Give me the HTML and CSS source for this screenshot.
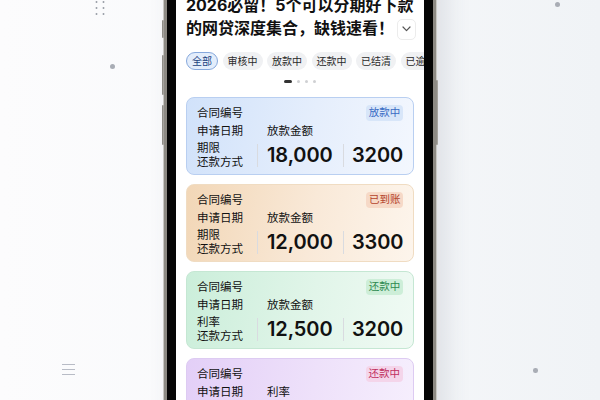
FILE: index.html
```html
<!DOCTYPE html>
<html lang="zh-CN">
<head>
<meta charset="utf-8">
<title>借款列表</title>
<link rel="stylesheet" href="styles.css">
</head>
<body>
<div class="stage">
  <span class="deco dotgrid"></span>
  <span class="deco dot dot-a"></span>
  <span class="deco dot dot-b"></span>
  <span class="deco dot dot-c"></span>
  <span class="deco burger"><i></i><i></i><i></i></span>

  <div class="phone">
    <span class="key key-l1"></span>
    <span class="key key-l2"></span>
    <span class="key key-l3"></span>
    <span class="key key-r1"></span>
    <div class="screen">
      <header class="head">
        <h1 class="title">2026必留！5个可以分期好下款的网贷深度集合，缺钱速看！</h1>
        <button class="more" type="button" aria-label="展开">
          <svg width="9" height="6" viewBox="0 0 9 6"><polyline points="1,1 4.5,4.6 8,1" fill="none" stroke="#555" stroke-width="1.2" stroke-linecap="round" stroke-linejoin="round"/></svg>
        </button>
      </header>

      <nav class="tabs">
        <span class="tab active">全部</span>
        <span class="tab">审核中</span>
        <span class="tab">放款中</span>
        <span class="tab">还款中</span>
        <span class="tab">已结清</span>
        <span class="tab">已逾期</span>
      </nav>

      <div class="pager"><i class="on"></i><i></i><i></i><i></i></div>

      <div class="cards">
        <div class="card blue">
          <span class="lbl">合同编号</span>
          <span class="badge">放款中</span>
          <span class="lbl">申请日期</span>
          <span class="sub">放款金额</span>
          <span class="lbl two">期限<br>还款方式</span>
          <span class="num">18,000</span>
          <span class="num last">3200</span>
        </div>
        <div class="card peach">
          <span class="lbl">合同编号</span>
          <span class="badge">已到账</span>
          <span class="lbl">申请日期</span>
          <span class="sub">放款金额</span>
          <span class="lbl two">期限<br>还款方式</span>
          <span class="num">12,000</span>
          <span class="num last">3300</span>
        </div>
        <div class="card green">
          <span class="lbl">合同编号</span>
          <span class="badge">还款中</span>
          <span class="lbl">申请日期</span>
          <span class="sub">放款金额</span>
          <span class="lbl two">利率<br>还款方式</span>
          <span class="num">12,500</span>
          <span class="num last">3200</span>
        </div>
        <div class="card purple">
          <span class="lbl">合同编号</span>
          <span class="badge">还款中</span>
          <span class="lbl">申请日期</span>
          <span class="sub">利率</span>
        </div>
      </div>
    </div>
  </div>
</div>
</body>
</html>
```

FILE: styles.css
```css
* { box-sizing: border-box; }

html, body {
  margin: 0;
  padding: 0;
}

body {
  width: 600px;
  height: 400px;
  overflow: hidden;
  font-family: "Inter", "Noto Sans CJK SC", sans-serif;
  color: #1d1d1f;
}

.stage {
  position: relative;
  width: 600px;
  height: 400px;
  overflow: hidden;
  display: flex;
  justify-content: center;
  background: linear-gradient(90deg, #fcfcfd 0%, #f8f9fb 45%, #f0f3f6 100%);
}

/* background decorations */
.deco { position: absolute; display: block; }

.dotgrid {
  left: 92.5px;
  top: -1px;
  width: 14px;
  height: 18px;
  background-image: radial-gradient(circle, #9ea3ab 0.9px, transparent 1.2px);
  background-size: 7px 6px;
}

.dot {
  width: 5px;
  height: 5px;
  border-radius: 50%;
  background: #a9adb5;
}
.dot-a { left: 110px; top: 64px; }
.dot-b { left: 555px; top: 2px; }
.dot-c { left: 533px; top: 368px; width: 4.5px; height: 4.5px; }

.burger {
  left: 62px;
  top: 364px;
  width: 13px;
  display: flex;
  flex-direction: column;
  gap: 4px;
}
.burger i {
  display: block;
  height: 1px;
  background: #b8bcc6;
}

/* phone */
.phone {
  position: relative;
  flex: none;
  width: 272px;
  height: 540px;
  margin-top: -70px;
  border: 3px solid #8d8a84;
  border-radius: 44px;
  background: #050505;
  padding: 9px;
  box-shadow: 0 0 0 1px #c9c8c4, 10px 0 26px rgba(70, 80, 100, 0.13);
}

.key {
  position: absolute;
  width: 2px;
  border-radius: 1px;
  background: linear-gradient(90deg, #85827c, #b0aea9);
}
.key-l1 { left: -5px; top: 87px; height: 18px; }
.key-l2 { left: -5px; top: 122px; height: 40px; }
.key-l3 { left: -5px; top: 172px; height: 40px; }
.key-r1 { right: -5px; top: 147px; height: 65px; }

.screen {
  height: 100%;
  background: #fff;
  border-radius: 34px;
  overflow: hidden;
  padding: 51.5px 10px 0;
}

/* header */
.head {
  display: grid;
}
.title, .more { grid-area: 1 / 1; }

.title {
  margin: 0;
  font-size: 16px;
  line-height: 23px;
  font-weight: 700;
  color: #111;
}

.more {
  justify-self: end;
  align-self: end;
  margin: 0 -2px 0 0;
  width: 19px;
  height: 21px;
  padding: 0;
  border: 1px solid #ececec;
  border-radius: 5px;
  background: #fff;
  display: flex;
  align-items: center;
  justify-content: center;
}

/* tabs */
.tabs {
  display: flex;
  gap: 4.5px;
  margin: 12.5px -10px 0 0;
  overflow: hidden;
  white-space: nowrap;
}
.tab {
  flex: none;
  height: 18px;
  padding: 0 4px;
  border: 1px solid transparent;
  border-radius: 9px;
  background: #f0f1f3;
  font-size: 10px;
  line-height: 16px;
  color: #2a2a2a;
}
.tab.active {
  padding: 0 5px;
  background: #e3edfb;
  border-color: #86a8dc;
  color: #22427f;
}

/* pager */
.pager {
  display: flex;
  justify-content: center;
  align-items: center;
  gap: 5px;
  margin-top: 10px;
  height: 3px;
}
.pager i {
  display: block;
  width: 3px;
  height: 3px;
  border-radius: 50%;
  background: #cfd0d3;
}
.pager i.on {
  width: 8px;
  border-radius: 2px;
  background: #333;
}

/* cards */
.cards {
  display: flex;
  flex-direction: column;
  gap: 9px;
  margin-top: 14px;
}

.card {
  flex: none;
  height: 78px;
  border: 1px solid;
  border-radius: 8px;
  padding: 7px 10px 5px;
  display: grid;
  grid-template-columns: 60px 86px 1fr;
  grid-auto-rows: auto;
  align-content: start;
  row-gap: 2px;
  align-items: center;
}

.lbl {
  grid-column: 1;
  font-size: 11.5px;
  line-height: 16px;
  color: #111;
  white-space: nowrap;
}
.lbl.two { line-height: 14px; }

.badge {
  grid-column: 2 / 4;
  justify-self: end;
  height: 16px;
  padding: 0 3px;
  border-radius: 4px;
  font-size: 10.5px;
  line-height: 16px;
}

.sub {
  grid-column: 2 / 4;
  padding-left: 10px;
  font-size: 11.5px;
  line-height: 16px;
  color: #111;
}

.num {
  height: 23px;
  border-left: 1px solid #d9dbe0;
  padding-left: 9px;
  font-size: 20px;
  line-height: 23px;
  font-weight: 600;
  color: #111;
  letter-spacing: -0.1px;
}
.num.last { padding-left: 8px; }

.blue {
  border-color: #b9cff1;
  background: linear-gradient(100deg, #d1e2fa 0%, #e5eefc 55%, #f3f7fe 100%);
}
.blue .badge { background: #d8e6f9; color: #3a6cc4; }

.peach {
  border-color: #f0dcc2;
  background: linear-gradient(100deg, #f2d7b7 0%, #f9e9d8 55%, #fdf5ec 100%);
}
.peach .badge { background: #f6d9c7; color: #b4442c; }

.green {
  border-color: #c5e7d3;
  background: linear-gradient(100deg, #cbeeda 0%, #e1f5e9 55%, #f0faf4 100%);
}
.green .badge { background: #cdeed8; color: #2d8a50; }

.purple {
  border-color: #ddcbf2;
  background: linear-gradient(100deg, #e3cff7 0%, #eee1fa 55%, #f6effd 100%);
}
.purple .badge { background: #f4d5ea; color: #c12f5f; }
```
